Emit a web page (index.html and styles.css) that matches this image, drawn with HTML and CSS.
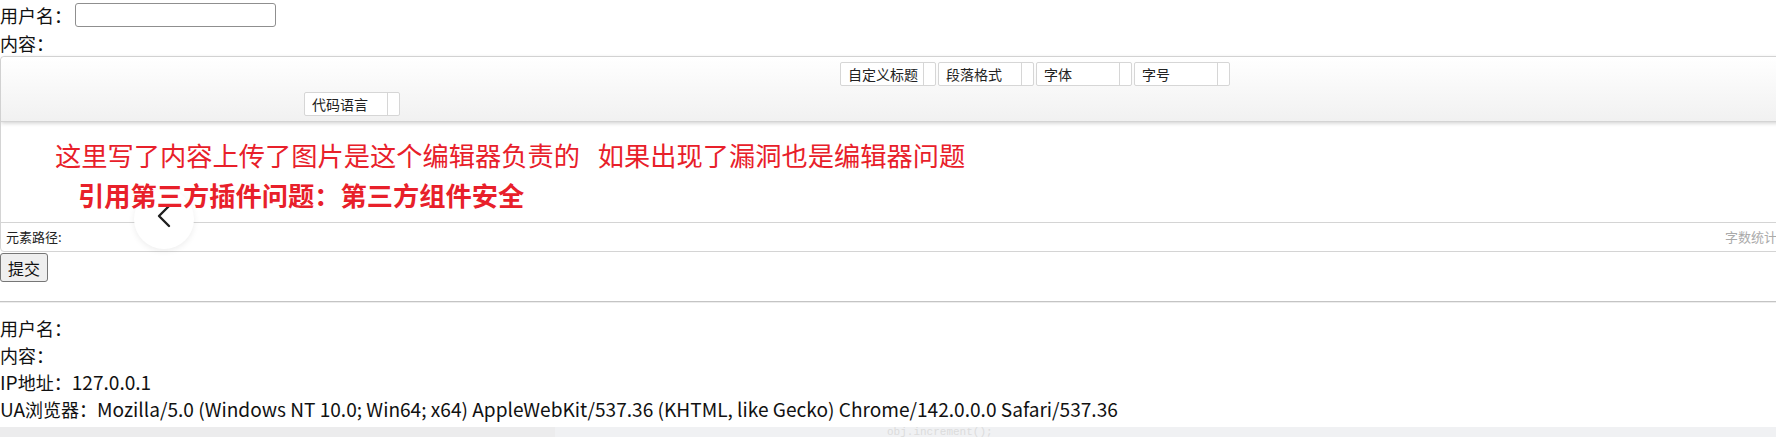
FILE: index.html
```html
<!DOCTYPE html>
<html lang="zh-CN">
<head>
<meta charset="utf-8">
<title>留言</title>
<link rel="stylesheet" href="styles.css">
</head>
<body>
<form class="form">
  <div class="row"><span class="lbl">用户名：</span><input class="inp" type="text"></div>
  <div class="row2">内容：</div>
  <div class="editor">
    <div class="toolbar">
      <div class="tbrow">
        <span class="spacer sp1"></span>
        <span class="combo"><span class="ctext">自定义标题</span><span class="carrow"></span></span>
        <span class="combo"><span class="ctext">段落格式</span><span class="carrow"></span></span>
        <span class="combo"><span class="ctext">字体</span><span class="carrow"></span></span>
        <span class="combo"><span class="ctext">字号</span><span class="carrow"></span></span>
      </div>
      <div class="tbrow">
        <span class="spacer sp2"></span>
        <span class="combo"><span class="ctext">代码语言</span><span class="carrow"></span></span>
      </div>
    </div>
    <div class="ebody">
      <p class="l1">这里写了内容上传了图片是这个编辑器负责的&nbsp;&nbsp;&nbsp;如果出现了漏洞也是编辑器问题</p>
      <p class="l2">引用第三方插件问题：第三方组件安全</p>
    </div>
    <div class="ebottom"><span class="path">元素路径:</span><span class="count">字数统计</span></div>
  </div>
  <button class="submit" type="button">提交</button>
</form>
<hr class="sep">
<div class="info">
  <div class="line">用户名：</div>
  <div class="line">内容：</div>
  <div class="line"><span class="lat">IP</span>地址：<span class="lat">127.0.0.1</span></div>
  <div class="line"><span class="lat">UA</span>浏览器：<span class="lat">Mozilla/5.0 (Windows NT 10.0; Win64; x64) AppleWebKit/537.36 (KHTML, like Gecko) Chrome/142.0.0.0 Safari/537.36</span></div>
</div>
<div class="strip"><span class="thumb"></span><span class="ghost">obj.increment();</span></div>
<div class="fab"><svg class="chev" width="18" height="24" viewBox="0 0 18 24"><polyline points="14,2 4,12 14,22" fill="none" stroke="#1f1f1f" stroke-width="2.4" stroke-linecap="round" stroke-linejoin="round"/></svg></div>
</body>
</html>
```
FILE: styles.css
```css
html, body {
  margin: 0;
  padding: 0;
  overflow: hidden;
  background: #fff;
}
body {
  font-family: "Noto Sans CJK SC", "Noto Sans", sans-serif;
  font-size: 18px;
  color: #111;
}
.form {
  margin: 0;
}
.row {
  display: flex;
  align-items: center;
  height: 30px;
}
.lbl {
  margin-right: 3px;
}
.inp {
  width: 201px;
  height: 24px;
  box-sizing: border-box;
  border: 1px solid #8f8f8f;
  border-radius: 3px;
  padding: 1px 2px;
  margin: 0;
  background: #fff;
}
.row2 {
  height: 26px;
  line-height: 26px;
}
.editor {
  width: 1790px;
  box-sizing: border-box;
  border: 1px solid #d4d4d4;
  border-radius: 4px;
  background: #fff;
}
.toolbar {
  position: relative;
  z-index: 3;
  background: linear-gradient(to bottom, #ffffff 0%, #f1f1f1 100%);
  border-bottom: 1px solid #d4d4d4;
  box-shadow: 0 1px 4px #cccccc;
  padding: 5px 0;
  display: flex;
  flex-direction: column;
  gap: 6px;
  border-radius: 4px 4px 0 0;
}
.tbrow {
  display: flex;
  height: 24px;
}
.spacer {
  flex: none;
}
.sp1 { width: 839px; }
.sp2 { width: 303px; }
.combo {
  display: flex;
  width: 96px;
  height: 24px;
  box-sizing: border-box;
  border: 1px solid #d6d6d6;
  border-radius: 2px;
  background: #fff;
  margin-right: 2px;
}
.ctext {
  flex: 1;
  padding-left: 7px;
  font-size: 14px;
  line-height: 22px;
  color: #222;
}
.carrow {
  width: 11px;
  border-left: 1px solid #d6d6d6;
}
.ebody {
  height: 100px;
  box-sizing: border-box;
  padding-top: 13px;
  color: #e8202a;
  font-size: 26.25px;
  line-height: 40px;
}
.ebody p {
  position: relative;
  z-index: 2;
  margin: 0;
  white-space: nowrap;
}
.l1 {
  padding-left: 54px;
}
.l2 {
  padding-left: 77px;
  font-weight: 700;
}
.ebottom {
  display: flex;
  justify-content: space-between;
  height: 28px;
  line-height: 28px;
  border-top: 1px solid #d4d4d4;
  padding: 0 12px 0 5px;
  font-size: 13px;
}
.path {
  color: #222;
}
.count {
  color: #aaa;
}
.submit {
  display: block;
  margin: 1px 0 0;
  height: 29px;
  padding: 0 7px;
  font-family: "Noto Sans CJK SC", sans-serif;
  font-size: 16px;
  color: #111;
  background: #efefef;
  border: 1px solid #767676;
  border-radius: 3px;
}
.sep {
  margin: 19px 0 0;
  height: 0;
  border: 0;
  border-top: 1px solid #c4c4c4;
  border-bottom: 1px solid #ededed;
}
.info {
  margin-top: 12px;
}
.line {
  height: 27px;
  line-height: 27px;
  white-space: nowrap;
}
.lat {
  font-size: 19.1px;
}
.strip {
  display: flex;
  margin-top: 4px;
  height: 14px;
  background: #f0f1f3;
  overflow: hidden;
}
.thumb {
  width: 555px;
  background: #ececed;
}
.ghost {
  margin-left: 332px;
  font-family: "Liberation Mono", monospace;
  font-size: 11px;
  line-height: 10px;
  color: #dcdcdc;
}
.fab {
  position: absolute;
  left: 134px;
  top: 189px;
  z-index: 1;
  width: 60px;
  height: 60px;
  border-radius: 50%;
  background: #fff;
  box-shadow: 0 2px 6px rgba(0, 0, 0, 0.07);
  display: flex;
  align-items: center;
  justify-content: center;
}
.chev {
  margin-bottom: 6px;
}
```
